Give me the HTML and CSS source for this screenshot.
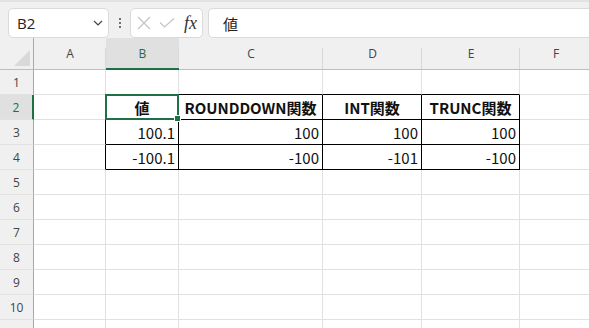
FILE: index.html
```html
<!DOCTYPE html>
<html lang="ja">
<head>
    <meta charset="UTF-8">
    <title>Sheet</title>
    <link rel="stylesheet" href="styles.css">
</head>
<body>
    <div class="formula-bar">
        <div class="name-box">
            <span>B2</span>
            <svg class="chevron" width="10" height="6" viewBox="0 0 10 6"><path d="M1 1 L5 5 L9 1" fill="none" stroke="#444" stroke-width="1.2"/></svg>
        </div>
        <div class="dots"><i></i><i></i><i></i></div>
        <div class="fx-box">
            <svg width="14" height="14" viewBox="0 0 14 14"><path d="M1 1 L13 13 M13 1 L1 13" stroke="#c4c4c4" stroke-width="1.2"/></svg>
            <svg width="16" height="10" viewBox="0 0 16 10"><path d="M1 4.5 L5.5 9 L15 0.5" fill="none" stroke="#c4c4c4" stroke-width="1.2"/></svg>
            <span class="fx">fx</span>
        </div>
        <div class="formula-input">値</div>
    </div>

    <div class="sheet">
        <div class="corner"><svg width="16" height="16" viewBox="0 0 16 16"><path d="M16 0 L16 16 L0 16 Z" fill="#d9d9d9"/></svg></div>
        <div class="col-head">A</div>
        <div class="col-head active">B</div>
        <div class="col-head">C</div>
        <div class="col-head">D</div>
        <div class="col-head">E</div>
        <div class="col-head">F</div>

        <div class="row-head">1</div>
        <div class="cell"></div>
        <div class="cell top"></div>
        <div class="cell top"></div>
        <div class="cell top"></div>
        <div class="cell top"></div>
        <div class="cell"></div>

        <div class="row-head active">2</div>
        <div class="cell left"></div>
        <div class="cell box th selected">値</div>
        <div class="cell box th">ROUNDDOWN関数</div>
        <div class="cell box th">INT関数</div>
        <div class="cell box th">TRUNC関数</div>
        <div class="cell"></div>

        <div class="row-head">3</div>
        <div class="cell left"></div>
        <div class="cell box num">100.1</div>
        <div class="cell box num">100</div>
        <div class="cell box num">100</div>
        <div class="cell box num">100</div>
        <div class="cell"></div>

        <div class="row-head">4</div>
        <div class="cell left"></div>
        <div class="cell box num">-100.1</div>
        <div class="cell box num">-100</div>
        <div class="cell box num">-101</div>
        <div class="cell box num">-100</div>
        <div class="cell"></div>
    </div>

    <script>
        // empty rows 5-10, plus the top of row 11 peeking in at the bottom
        const sheet = document.querySelector('.sheet');
        for (let r = 5; r <= 11; r++) {
            const head = document.createElement('div');
            head.className = 'row-head';
            if (r <= 10) head.textContent = r;
            sheet.appendChild(head);
            for (let c = 0; c < 6; c++) {
                const cell = document.createElement('div');
                cell.className = 'cell';
                sheet.appendChild(cell);
            }
        }
    </script>
</body>
</html>
```

FILE: styles.css
```css
body {
    margin: 0;
    background: #ffffff;
    font-family: "Noto Sans CJK JP", "Noto Sans", sans-serif;
    overflow: hidden;
}
.formula-bar {
    display: flex;
    align-items: stretch;
    height: 38px;
    box-sizing: border-box;
    padding: 6px 0 0 8px;
    background: #f0f0f0;
    border-top: 2px solid #e2e2e2;
}
.name-box {
    width: 101px;
    box-sizing: border-box;
    display: flex;
    align-items: center;
    justify-content: space-between;
    padding: 0 5px 0 8px;
    background: #fff;
    border: 1px solid #dadada;
    border-radius: 5px;
    font-family: "Open Sans", sans-serif;
    font-size: 15px;
    color: #222;
}
.dots {
    width: 21px;
    display: flex;
    flex-direction: column;
    align-items: center;
    justify-content: center;
    gap: 2px;
}
.dots i {
    width: 2px;
    height: 2px;
    background: #444;
    border-radius: 1px;
}
.fx-box {
    width: 73px;
    box-sizing: border-box;
    display: flex;
    align-items: center;
    gap: 8px;
    padding-left: 6px;
    background: #fff;
    border: 1px solid #dadada;
    border-radius: 5px;
}
.fx {
    font-family: "Liberation Serif", serif;
    font-style: italic;
    font-size: 18px;
    color: #333;
    margin-left: 1px;
}
.formula-input {
    flex: 1;
    margin-left: 5px;
    padding-left: 14px;
    display: flex;
    align-items: center;
    background: #fff;
    border: 1px solid #dadada;
    border-right: none;
    border-radius: 5px 0 0 5px;
    font-size: 15px;
    color: #222;
}
.sheet {
    display: grid;
    grid-template-columns: 34px 72px 73px 144px 99px 98px 72px;
    grid-template-rows: 32px;
    grid-auto-rows: 25px;
}
.corner {
    background: #f0f0f0;
    border-right: 1px solid #a8a8a8;
    border-bottom: 1px solid #bdbdbd;
    display: flex;
    align-items: flex-end;
    justify-content: flex-end;
    padding: 0 3px 3px 0;
    box-sizing: border-box;
}
.col-head {
    position: relative;
    background: #f0f0f0;
    border-bottom: 1px solid #bdbdbd;
    display: flex;
    align-items: center;
    justify-content: center;
    font-family: "Open Sans", sans-serif;
    font-size: 12px;
    color: #444;
}
.col-head::after {
    content: "";
    position: absolute;
    right: 0;
    top: 10px;
    bottom: 0;
    width: 1px;
    background: #d8d8d8;
}
.col-head.active {
    background: #e0e0e0;
    color: #1e6e42;
    border-bottom: 2px solid #1e7145;
}
.row-head {
    background: #f0f0f0;
    border-right: 1px solid #a8a8a8;
    border-bottom: 1px solid #e2e2e2;
    box-sizing: border-box;
    display: flex;
    align-items: center;
    justify-content: center;
    font-family: "Open Sans", sans-serif;
    font-size: 12px;
    color: #444;
}
.row-head.active {
    background: #e0e0e0;
    color: #1e6e42;
    border-right: 2px solid #1e7145;
}
.cell {
    box-sizing: border-box;
    border-right: 1px solid #e1e1e1;
    border-bottom: 1px solid #e1e1e1;
    display: flex;
    align-items: center;
    font-size: 15px;
    color: #111;
    white-space: nowrap;
}
.cell.top {
    border-bottom-color: #000;
}
.cell.left {
    border-right-color: #000;
}
.cell.box {
    border-right-color: #000;
    border-bottom-color: #000;
}
.th {
    justify-content: center;
    font-weight: bold;
    font-size: 15px;
}
.num {
    justify-content: flex-end;
    padding-right: 3px;
}
.selected {
    position: relative;
}
.selected::before {
    content: "";
    position: absolute;
    left: -1px;
    top: -1px;
    right: -1px;
    bottom: -1px;
    border: 2px solid #1e7145;
}
.selected::after {
    content: "";
    position: absolute;
    right: -3px;
    bottom: -3px;
    width: 5px;
    height: 5px;
    background: #1e7145;
    border: 1px solid #fff;
}
```
